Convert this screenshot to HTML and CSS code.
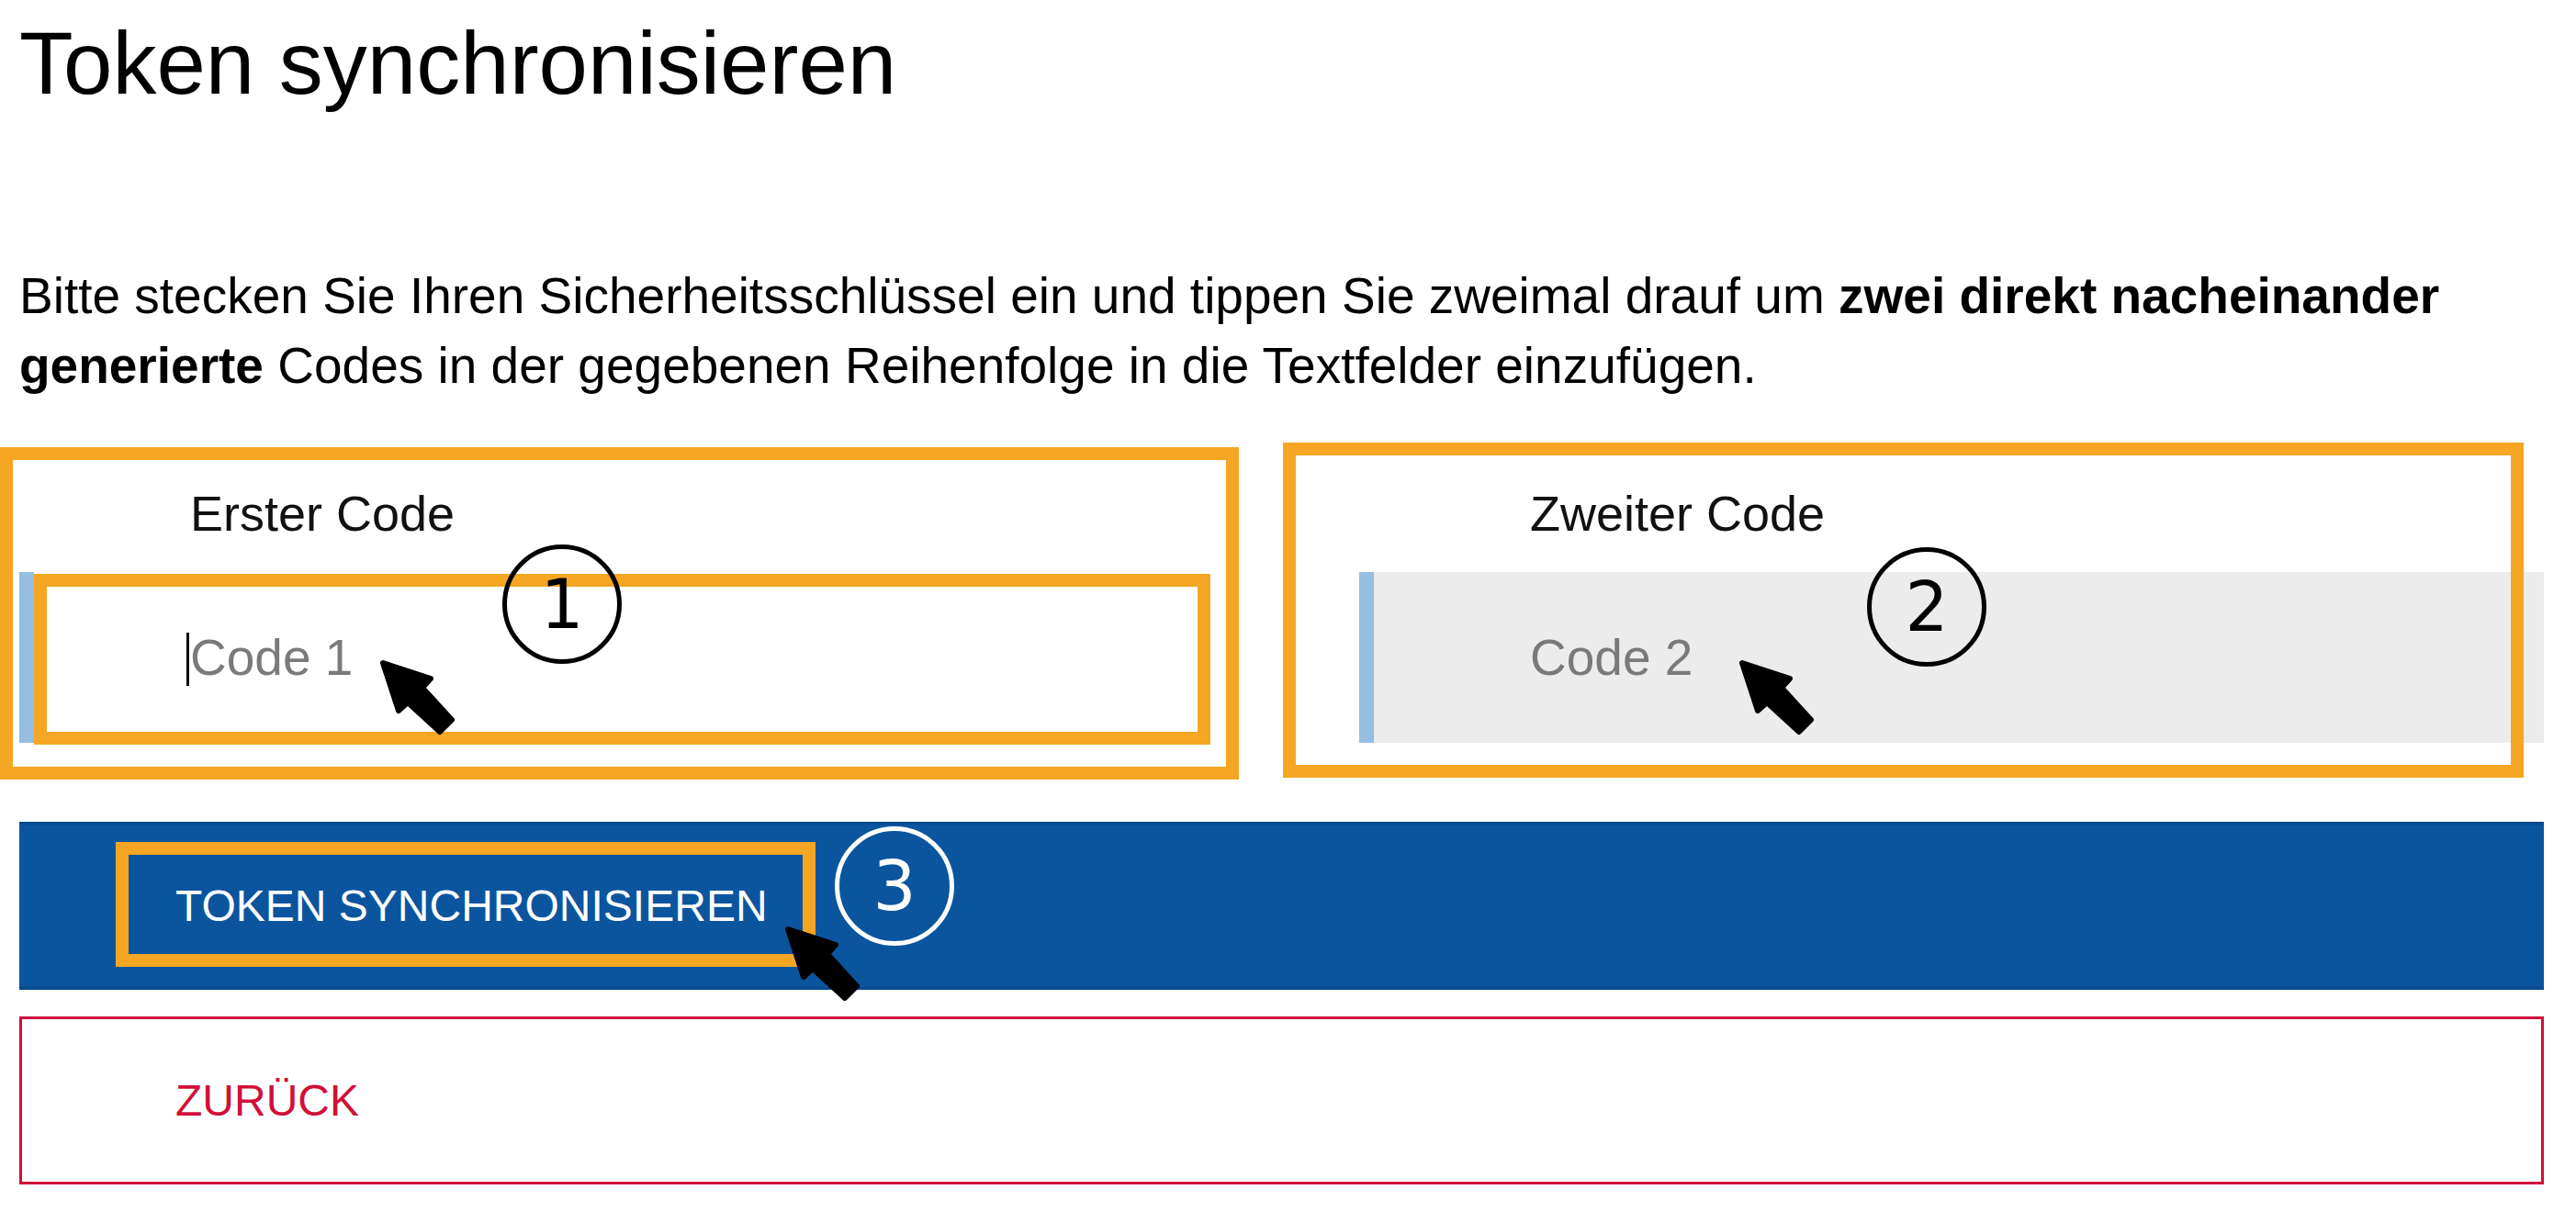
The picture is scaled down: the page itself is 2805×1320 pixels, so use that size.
FILE: index.html
```html
<!DOCTYPE html>
<html lang="de">
<head>
    <meta charset="UTF-8">
    <title>Token synchronisieren</title>
    <link rel="stylesheet" href="styles.css">
</head>
<body>
    <div class="page">
        <h1 class="title">Token synchronisieren</h1>

        <p class="intro">Bitte stecken Sie Ihren Sicherheitsschlüssel ein und tippen Sie zweimal drauf um <b>zwei direkt nacheinander generierte</b> Codes in der gegebenen Reihenfolge in die Textfelder einzufügen.</p>

        <div class="fields">
            <div class="field">
                <label class="field-label">Erster Code</label>
                <div class="field-input is-focused"><span class="placeholder">Code 1</span></div>
            </div>
            <div class="field">
                <label class="field-label">Zweiter Code</label>
                <div class="field-input is-empty"><span class="placeholder">Code 2</span></div>
            </div>
        </div>

        <div class="actions">
            <button class="btn btn-primary">TOKEN SYNCHRONISIEREN</button>
            <button class="btn btn-outline">ZURÜCK</button>
        </div>

        <!-- annotations drawn over the form -->
        <div class="mark mark-field-1"></div>
        <div class="mark mark-field-2"></div>
        <div class="mark mark-input-1"></div>
        <div class="mark mark-button"></div>

        <div class="step step-1">1</div>
        <div class="step step-2">2</div>
        <div class="step step-3 step-light">3</div>

        <svg class="pointer pointer-1" viewBox="-4 -4 86 86"><polygon points="0,0 52,17 43,27 75,62 62,75 27,43 17,52"/></svg>
        <svg class="pointer pointer-2" viewBox="-4 -4 86 86"><polygon points="0,0 52,17 43,27 75,62 62,75 27,43 17,52"/></svg>
        <svg class="pointer pointer-3" viewBox="-4 -4 86 86"><polygon points="0,0 52,17 43,27 75,62 62,75 27,43 17,52"/></svg>
    </div>
</body>
</html>
```

FILE: styles.css
```css
:root {
    --text: #111111;
    --placeholder: #7a7a7a;
    --primary: #0b559f;
    --primary-edge: #064a90;
    --danger: #d0103a;
    --focus-bar: #94bfe2;
    --input-empty: #ececec;
    --mark: #f5a623;
}

* {
    margin: 0;
    padding: 0;
    box-sizing: border-box;
}

body {
    background: #ffffff;
    color: var(--text);
    font-family: 'Liberation Sans', Arial, sans-serif;
}

.page {
    position: relative;
    width: 2805px;
    height: 1320px;
    padding: 14px 35px 0 21px;
    overflow: hidden;
}

.title {
    font-size: 96px;
    font-weight: 400;
    line-height: 1.15;
    color: #000000;
}

.intro {
    margin-top: 160px;
    font-size: 55px;
    line-height: 76px;
    color: #000000;
}

.intro b {
    font-weight: 700;
}

.fields {
    display: grid;
    grid-template-columns: 1290px 1290px;
    column-gap: 169px;
    margin-top: 85px;
}

.field-label {
    display: block;
    padding-left: 186px;
    font-size: 54px;
    line-height: 76px;
    color: var(--text);
}

.field-input {
    position: relative;
    height: 186px;
    margin-top: 26px;
    display: flex;
    align-items: center;
    padding-left: 170px;
    border-left: 16px solid var(--focus-bar);
    background: #ffffff;
}

.field-input.is-empty {
    background: var(--input-empty);
}

.field-input.is-focused::before {
    content: '';
    position: absolute;
    left: 166px;
    top: 66px;
    width: 3px;
    height: 58px;
    background: #000000;
}

.placeholder {
    font-size: 55px;
    color: var(--placeholder);
}

.actions {
    display: flex;
    flex-direction: column;
    gap: 29px;
    margin-top: 86px;
}

.btn {
    display: block;
    width: 100%;
    height: 183px;
    padding-left: 170px;
    text-align: left;
    font-family: inherit;
    font-size: 48px;
    cursor: pointer;
}

.btn-primary {
    background: var(--primary);
    color: #ffffff;
    border: none;
    border-top: 3px solid var(--primary-edge);
    border-bottom: 3px solid var(--primary-edge);
}

.btn-outline {
    background: #ffffff;
    color: var(--danger);
    border: 3px solid var(--danger);
    font-size: 48px;
    padding-left: 167px;
}

/* orange highlight frames */
.mark {
    position: absolute;
    border: 14px solid var(--mark);
}

.mark-field-1 {
    left: 0;
    top: 487px;
    width: 1349px;
    height: 362px;
}

.mark-field-2 {
    left: 1397px;
    top: 482px;
    width: 1351px;
    height: 365px;
}

.mark-input-1 {
    left: 37px;
    top: 625px;
    width: 1281px;
    height: 186px;
}

.mark-button {
    left: 126px;
    top: 917px;
    width: 762px;
    height: 136px;
}

/* numbered circles */
.step {
    position: absolute;
    width: 130px;
    height: 130px;
    border: 5px solid #000000;
    border-radius: 50%;
    display: flex;
    align-items: center;
    justify-content: center;
    font-family: 'DejaVu Sans', sans-serif;
    font-size: 74px;
    line-height: 1;
    color: #000000;
}

.step-light {
    border-color: #ffffff;
    color: #ffffff;
}

.step-1 {
    left: 547px;
    top: 593px;
}

.step-2 {
    left: 2033px;
    top: 596px;
}

.step-3 {
    left: 909px;
    top: 900px;
}

/* mouse pointers */
.pointer {
    position: absolute;
    width: 86px;
    height: 86px;
}

.pointer polygon {
    fill: #000000;
    stroke: #000000;
    stroke-width: 6;
    stroke-linejoin: round;
}

.pointer-1 {
    left: 413px;
    top: 718px;
}

.pointer-2 {
    left: 1893px;
    top: 718px;
}

.pointer-3 {
    left: 854px;
    top: 1008px;
}
```
